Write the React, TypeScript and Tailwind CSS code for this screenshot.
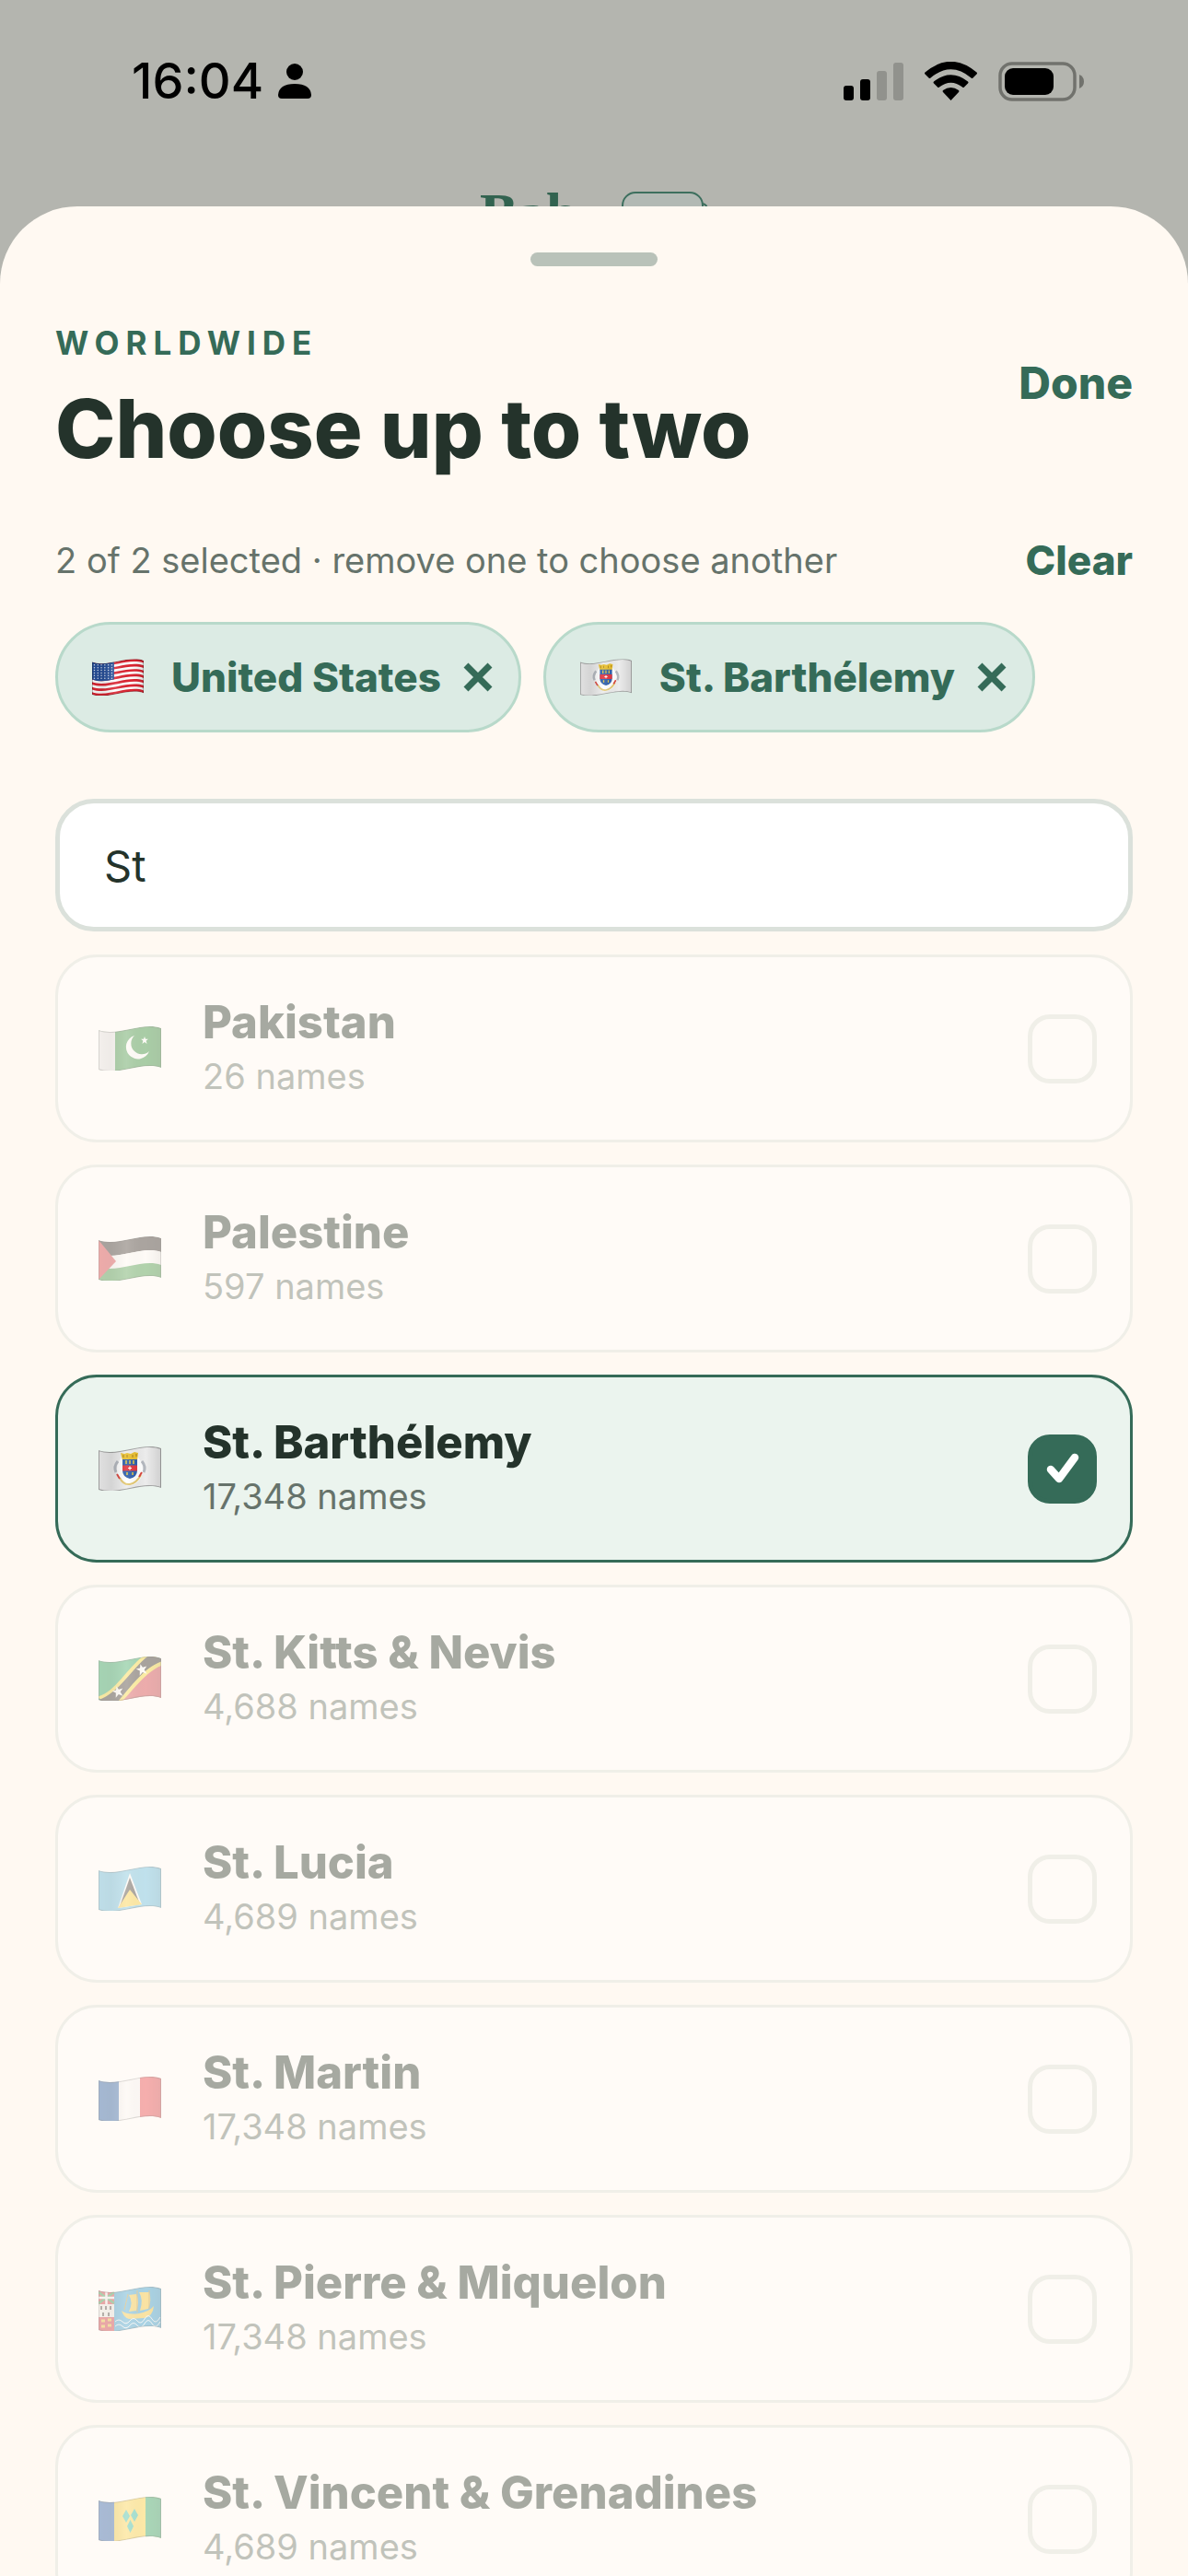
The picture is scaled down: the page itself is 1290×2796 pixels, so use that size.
import React, { useId, useState } from 'react';

type FlagCode = 'us' | 'bl' | 'pk' | 'ps' | 'kn' | 'lc' | 'mf' | 'pm' | 'vc';

interface Country {
  code: FlagCode;
  name: string;
  count: number;
}

const countries: Country[] = [
  { code: 'pk', name: 'Pakistan', count: 26 },
  { code: 'ps', name: 'Palestine', count: 597 },
  { code: 'bl', name: 'St. Barthélemy', count: 17348 },
  { code: 'kn', name: 'St. Kitts & Nevis', count: 4688 },
  { code: 'lc', name: 'St. Lucia', count: 4689 },
  { code: 'mf', name: 'St. Martin', count: 17348 },
  { code: 'pm', name: 'St. Pierre & Miquelon', count: 17348 },
  { code: 'vc', name: 'St. Vincent & Grenadines', count: 4689 },
];

const MAX_SELECTED = 2;

// Horizontal band that follows the wave of the cloth, from y0 to y1 (0 - 43)
const band = (y0: number, y1: number) =>
  `M0 ${y0 + 4}C11 ${y0 + 8} 23 ${y0 + 5} 34 ${y0 + 3}C45 ${y0 + 1} 57 ${y0 - 2} 68 ${y0 + 2}` +
  `V${y1 + 2}C57 ${y1 - 2} 45 ${y1 + 1} 34 ${y1 + 3}C23 ${y1 + 5} 11 ${y1 + 8} 0 ${y1 + 4}Z`;

const STAR = 'M0 -6L1.5 -2L6 -2L2.5 1L4 6L0 3L-4 6L-2.5 1L-6 -2L-1.5 -2Z';

const flagArt: Record<FlagCode, React.ReactNode> = {
  us: (
    <>
      <path d={band(0, 43)} fill="#fff" />
      {[0, 2, 4, 6, 8, 10, 12].map((i) => (
        <path key={i} d={band(i * 3.3, i * 3.3 + 3.3)} fill="#dc2532" />
      ))}
      <path d="M0 4C11 8 20 5.500 29 4V27C20 28.500 11 31 0 27Z" fill="#27509b" />
      {[0, 1, 2, 3, 4, 5].map((r) =>
        [0, 1, 2, 3, 4, 5].map((c) => (
          <circle key={`${r}-${c}`} cx={3 + c * 4.6} cy={8 + r * 3.5} r="0.9" fill="#dbe4f2" />
        ))
      )}
    </>
  ),
  bl: (
    <>
      <path d={band(0, 43)} fill="#ececec" />
      <ellipse cx="34" cy="25" rx="14" ry="17" fill="#fff" />
      <path d="M21 16q-5 6-2 12M47 16q5 6 2 12" stroke="#b4b8bf" strokeWidth="3" fill="none" />
      <path d="M23 34Q27 42 34 41Q41 40 46 31" stroke="#e4c870" strokeWidth="2" fill="none" />
      <path d="M20 30l3 5M47 28l-3 5" stroke="#d8443c" strokeWidth="2" />
      <path d="M24 7l4 1 3-1 4 1 4-2 4 1-1 8H26Z" fill="#e9bf2c" />
      <path d="M27 9v3M31 9v3M37 9v3M41 8v3" stroke="#a67c12" strokeWidth="1" />
      <path d="M26 14H42V26Q42 33 34 35Q26 33 26 26Z" fill="#2a5caa" />
      <path d="M26 20.500H42V26.500H26Z" fill="#e0323c" />
      <path d="M30 15v4M34 15v4M38 15v4M31 28v3M37 28v3" stroke="#e9c93c" strokeWidth="1.500" />
      <path d="M34 21.500v4M32 23.500h4" stroke="#fff" strokeWidth="1.200" />
    </>
  ),
  pk: (
    <>
      <path d={band(0, 43)} fill="#2a8c36" />
      <path d="M0 0H18V48H0Z" fill="#eeeef0" />
      <path d="M39 10A13 13 0 1 0 55 27A11 11 0 0 1 39 10Z" fill="#fff" />
      <path d={STAR} transform="translate(50 15) scale(.65)" fill="#fff" />
    </>
  ),
  ps: (
    <>
      <path d={band(0, 15)} fill="#2c2624" />
      <path d={band(15, 29)} fill="#fff" />
      <path d={band(29, 43)} fill="#3f9a45" />
      <path d="M0 4L19 27L0 47Z" fill="#de3b43" />
    </>
  ),
  kn: (
    <>
      <path d={band(0, 43)} fill="#20a35a" />
      <path d="M68 4V48H18Z" fill="#d23a45" />
      <path d="M-4 44C18 42 34 6 54 -4L76 8C54 10 36 40 22 52Z" fill="#f7d92e" />
      <path d="M-4 48C22 43 38 9 56 -2L74 4C50 8 32 38 18 52Z" fill="#27221f" />
      <path d={STAR} transform="translate(21 38) rotate(-15)" fill="#fff" />
      <path d={STAR} transform="translate(47 14) rotate(-15)" fill="#fff" />
    </>
  ),
  lc: (
    <>
      <path d={band(0, 43)} fill="#62bfe6" />
      <path d="M34 7L47 41L21 45Z" fill="#fff" />
      <path d="M34 12L45 41L23 43Z" fill="#2a2522" />
      <path d="M34 25L47 41L21 45Z" fill="#fbcf2f" />
    </>
  ),
  mf: (
    <>
      <path d={band(0, 43)} fill="#fcfbfc" />
      <path d="M0 0H22V48H0Z" fill="#1f5cab" />
      <path d="M45 0H68V48H45Z" fill="#ea4048" />
    </>
  ),
  pm: (
    <>
      <path d={band(0, 43)} fill="#2b9bd2" />
      <path d="M0 0H17V19H0Z" fill="#d8323e" />
      <path d="M0 6L17 18M17 6L0 18" stroke="#35a04e" strokeWidth="2.500" />
      <path d="M8.500 4V19M0 12H17" stroke="#fff" strokeWidth="2.500" />
      <path d="M0 19H17V33H0Z" fill="#f4f2ee" />
      <path d="M3 21v4M8 21v4M13 21v4M5 28v4M11 28v4" stroke="#4a4440" strokeWidth="2" />
      <path d="M0 33H17V48H0Z" fill="#d8323e" />
      <path d="M3 37h4M10 36h4M3 43h4M10 42h4" stroke="#f2c233" strokeWidth="3" />
      <path d="M25 26Q31 31 44 29Q55 27 60 21Q59 33 49 34L33 35Q27 33 25 26Z" fill="#f4c42f" />
      <path d="M33 9q5 8 0 18l8-1q4-10 0-18ZM44 6q5 8 1 20l9-2q4-10 1-18Z" fill="#f4c42f" />
      <path d="M42 4V28M55 4V24M32 8l-4 17" stroke="#b98b1d" strokeWidth="1" fill="none" />
      <path
        d="M18 38q4-4 8 0t8-1 8 0 8-2 8 0 9-2M18 43q4-4 8 0t8-1 8 0 8-2 8 0 9-2"
        stroke="#e8f4fa"
        strokeWidth="1"
        fill="none"
      />
    </>
  ),
  vc: (
    <>
      <path d={band(0, 43)} fill="#fbd23a" />
      <path d="M0 0H17V48H0Z" fill="#2a63b4" />
      <path d="M51 0H68V48H51Z" fill="#2aa562" />
      <path d="M30 14L34 21L30 28L26 21ZM39 13L43 20L39 27L35 20ZM34.500 25L38 32L34.500 39L31 32Z" fill="#1fb99c" />
    </>
  ),
};

const Flag: React.FC<{ code: FlagCode; className: string }> = ({ code, className }) => {
  const id = useId();
  return (
    <svg viewBox="0 0 68 48" className={className} aria-hidden="true">
      <defs>
        <clipPath id={`${id}c`}>
          <path d={band(0, 43)} />
        </clipPath>
        <linearGradient id={`${id}g`} x1="0" x2="1" y1="0" y2="0">
          <stop offset="0" stopColor="#000" stopOpacity="0.05" />
          <stop offset="0.2" stopColor="#000" stopOpacity="0.1" />
          <stop offset="0.45" stopColor="#fff" stopOpacity="0.12" />
          <stop offset="0.75" stopColor="#000" stopOpacity="0" />
          <stop offset="1" stopColor="#000" stopOpacity="0.12" />
        </linearGradient>
      </defs>
      <g clipPath={`url(#${id}c)`}>
        {flagArt[code]}
        <path d={band(0, 43)} fill={`url(#${id}g)`} stroke="#000" strokeOpacity="0.3" strokeWidth="2" />
      </g>
    </svg>
  );
};

const StatusBar: React.FC = () => (
  <div className="flex items-center justify-between pt-14 pl-[143px] pr-[113px]">
    <div className="flex items-center gap-4">
      <span className="text-[54px] leading-16 font-medium text-black">16:04</span>
      <svg viewBox="0 0 36 38" className="h-[38px] w-9" aria-hidden="true">
        <ellipse cx="18" cy="9" rx="9" ry="9" />
        <path d="M4 38Q0 38 0 34Q1 22 18 22Q35 22 36 34Q36 38 32 38Z" />
      </svg>
    </div>
    <div className="flex items-center gap-[23px]">
      <svg viewBox="0 0 65 41" className="h-[41px] w-[65px]" aria-hidden="true">
        <rect x="0" y="25" width="11" height="16" rx="3" />
        <rect x="18" y="18" width="11" height="23" rx="3" />
        <rect x="36" y="9" width="11" height="32" rx="3" fill="#91928d" />
        <rect x="54" y="0" width="11" height="41" rx="3" fill="#91928d" />
      </svg>
      <svg viewBox="0 0 57 42" className="h-[42px] w-[57px]" aria-hidden="true">
        <path d="M28.500 42L20 33Q19 32 20 31Q28.500 25 37 31Q38 32 37 33Z" />
        <path d="M14 27.500L10 23.500Q9 22.500 10 21.500Q28.500 7 47 21.500Q48 22.500 47 23.500L43 27.500Q42 28.500 41 27.500Q28.500 18 16 27.500Q15 28.500 14 27.500Z" />
        <path d="M4.500 17.500L0.500 13.500Q-0.500 12.500 0.500 11.500Q28.500 -12 56.500 11.500Q57.500 12.500 56.500 13.500L52.500 17.500Q51.500 18.500 50.500 17.500Q28.500 -1 6.500 17.500Q5.500 18.500 4.500 17.500Z" />
      </svg>
      <svg viewBox="0 0 93 43" className="h-[43px] w-[93px]" aria-hidden="true">
        <rect x="2" y="2" width="81" height="39" rx="13" fill="none" stroke="#71726d" strokeWidth="3.500" />
        <rect x="7" y="7" width="53" height="29" rx="9" />
        <path d="M88 14Q93 16 93 21.500Q93 27 88 29Z" fill="#71726d" />
      </svg>
    </div>
  </div>
);

const App: React.FC = () => {
  const [query, setQuery] = useState('St');
  const [selected, setSelected] = useState<Country[]>([
    { code: 'us', name: 'United States', count: 0 },
    countries[2],
  ]);

  const isFull = selected.length >= MAX_SELECTED;
  const isSelected = (name: string) => selected.some((c) => c.name === name);

  const toggle = (country: Country) => {
    setSelected((prev) =>
      prev.some((c) => c.name === country.name)
        ? prev.filter((c) => c.name !== country.name)
        : [...prev, country]
    );
  };

  return (
    <div className="flex h-screen flex-col overflow-hidden bg-[#b4b5af] font-[Inter,sans-serif]">
      {/* Dimmed page, the sheet slides over its lower part */}
      <header className="h-56 shrink-0">
        <StatusBar />
        <div className="flex items-start justify-center gap-4 pt-[82px]">
          <span className="font-['Liberation_Serif',serif] text-[62px] leading-[58px] font-bold text-[#326350]">
            Baby
          </span>
          <svg viewBox="0 0 94 60" className="mt-1.5 h-[60px] w-[94px]" aria-hidden="true">
            <rect x="1" y="1" width="87" height="58" rx="14" fill="#b2b9b4" stroke="#3d6f5e" strokeWidth="2" />
            <path d="M88 13Q93 14 93 20V40" fill="none" stroke="#3d6f5e" strokeWidth="2" />
          </svg>
        </div>
      </header>

      {/* Sheet */}
      <main className="relative flex-1 rounded-t-[84px] bg-[#fff9f2] px-15 pt-[50px]">
        <div className="mx-auto h-[15px] w-[138px] rounded-full bg-[#b9c2b9]" />

        <div className="mt-[61px] flex items-start justify-between">
          <div>
            <p className="text-[35px] leading-[44px] font-bold tracking-[7px] text-[#356b58]">WORLDWIDE</p>
            <h1 className="mt-3 text-[88px] leading-[118px] font-extrabold text-[#24332b]">Choose up to two</h1>
          </div>
          <button type="button" className="h-[132px] text-[48px] font-extrabold text-[#356b58]">
            Done
          </button>
        </div>

        <div className="mt-[54px] flex items-center justify-between">
          <p className="text-[38px] leading-[60px] text-[#66736b]">
            {selected.length} of {MAX_SELECTED} selected · remove one to choose another
          </p>
          <button
            type="button"
            onClick={() => setSelected([])}
            className="text-[44px] leading-[60px] font-extrabold text-[#356b58]"
          >
            Clear
          </button>
        </div>

        <div className="mt-[37px] flex gap-6">
          {selected.map((country) => (
            <button
              key={country.name}
              type="button"
              aria-label={`Remove ${country.name}`}
              onClick={() => toggle(country)}
              className="flex h-[120px] items-center rounded-full border-3 border-[#b8d9ca] bg-[#dcebe4] pr-7 pl-[37px] text-[#356b58]"
            >
              <Flag code={country.code} className="h-10 w-14" />
              <span className="ml-[30px] text-[44px] leading-[60px] font-extrabold">{country.name}</span>
              <svg viewBox="0 0 32 32" className="ml-6 size-8" aria-hidden="true">
                <path d="M3 3L29 29M29 3L3 29" stroke="currentColor" strokeWidth="7" />
              </svg>
            </button>
          ))}
        </div>

        <input
          type="text"
          aria-label="Search countries"
          value={query}
          onChange={(e) => setQuery(e.target.value)}
          className="mt-[72px] block h-36 w-full rounded-[42px] border-5 border-[#dbe1db] bg-white px-12 text-[47px] text-[#24332b] outline-none"
        />

        <ul className="mt-[25px] space-y-6">
          {countries.map((country) => {
            const checked = isSelected(country.name);
            const disabled = isFull && !checked;
            return (
              <li key={country.name}>
                <label
                  className={`flex h-[204px] items-center rounded-[45px] border-3 pr-9 pl-11 ${
                    checked ? 'border-[#356b58] bg-[#ebf4ee]' : 'border-[#dbe1db] bg-white'
                  } ${disabled ? 'opacity-40' : ''}`}
                >
                  <Flag code={country.code} className="h-12 w-[68px]" />
                  <span className="ml-[45px] flex flex-1 flex-col">
                    <span className="text-[49px] leading-[60px] font-extrabold text-[#24332b]">{country.name}</span>
                    <span className="text-[38px] leading-[56px] text-[#66736b]">
                      {country.count.toLocaleString('en-US')} names
                    </span>
                  </span>
                  <span className="grid place-items-center">
                    <input
                      type="checkbox"
                      checked={checked}
                      disabled={disabled}
                      onChange={() => toggle(country)}
                      className="col-start-1 row-start-1 size-[75px] appearance-none rounded-3xl border-5 border-[#dbe1db] checked:border-[#356b58] checked:bg-[#356b58]"
                    />
                    {checked && (
                      <svg viewBox="0 0 36 34" className="pointer-events-none z-10 col-start-1 row-start-1 h-[34px] w-9">
                        <path
                          d="M5 18L14 28L31 5"
                          fill="none"
                          stroke="#fff"
                          strokeWidth="8.500"
                          strokeLinecap="round"
                          strokeLinejoin="round"
                        />
                      </svg>
                    )}
                  </span>
                </label>
              </li>
            );
          })}
        </ul>
      </main>
    </div>
  );
};

export default App;
